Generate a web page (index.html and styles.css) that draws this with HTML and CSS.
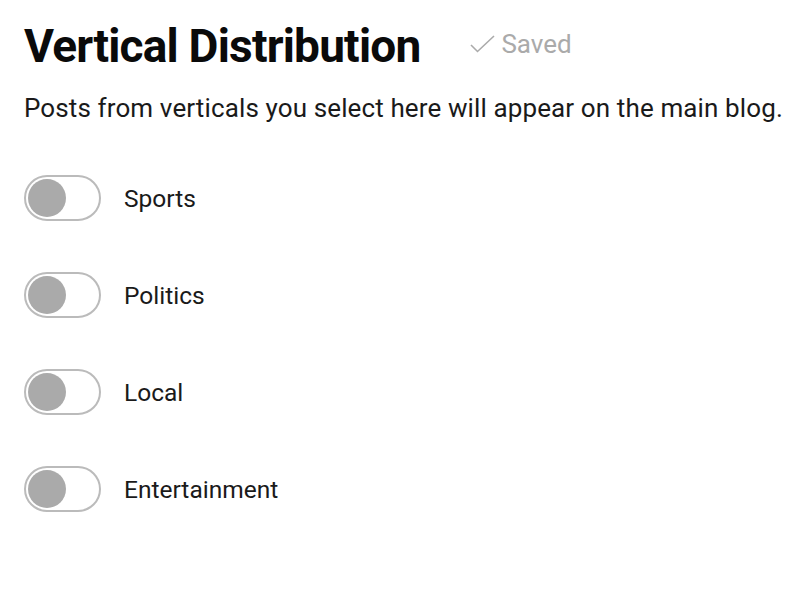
FILE: index.html
```html
<!DOCTYPE html>
<html lang="en">
<head>
  <meta charset="UTF-8">
  <meta name="viewport" content="width=device-width, initial-scale=1.0">
  <title>Vertical Distribution</title>
  <link rel="stylesheet" href="styles.css">
</head>
<body>
  <div class="container">
    <div class="header">
      <h1>Vertical Distribution</h1>
      <span class="saved">
        <svg class="check" width="25" height="18" viewBox="0 0 25 18">
          <path d="M1 10 L7.5 16.5 L24 1" fill="none" stroke="#aaa" stroke-width="1.6"/>
        </svg>
        Saved
      </span>
    </div>
    <p class="desc">Posts from verticals you select here will appear on the main blog.</p>

    <ul class="verticals">
      <li class="vertical">
        <span class="toggle"><span class="knob"></span></span>
        <span class="label">Sports</span>
      </li>
      <li class="vertical">
        <span class="toggle"><span class="knob"></span></span>
        <span class="label">Politics</span>
      </li>
      <li class="vertical">
        <span class="toggle"><span class="knob"></span></span>
        <span class="label">Local</span>
      </li>
      <li class="vertical">
        <span class="toggle"><span class="knob"></span></span>
        <span class="label">Entertainment</span>
      </li>
    </ul>
  </div>
</body>
</html>
```

FILE: styles.css
```css
body{
  margin: 0;
  background: #fff;
  font-family: Roboto, "Liberation Sans", sans-serif;
  font-variant-ligatures: none;
  color: #1a1a1a;
}

.container{
  padding: 14px 24px;
}

.header{
  display: flex;
  align-items: center;
}

.header h1{
  margin: 0;
  font-size: 46px;
  font-weight: bold;
  letter-spacing: -0.8px;
  color: #0a0a0a;
  line-height: 64px;
}

.saved{
  display: flex;
  align-items: center;
  margin-left: 50px;
  margin-bottom: 4px;
  font-size: 26px;
  color: #aaa;
}

.saved .check{
  margin-right: 6px;
}

.desc{
  margin: 14px 0 0;
  font-size: 26px;
  letter-spacing: 0.12px;
  line-height: 32px;
  white-space: nowrap;
}

.verticals{
  list-style: none;
  margin: 51px 0 0;
  padding: 0;
}

.vertical{
  display: flex;
  align-items: center;
  height: 46px;
  margin-bottom: 51px;
}

.toggle{
  box-sizing: border-box;
  display: flex;
  align-items: center;
  width: 77px;
  height: 46px;
  padding: 0 2px;
  border: 2px solid #bbb;
  border-radius: 23px;
  cursor: pointer;
}

.knob{
  width: 38px;
  height: 38px;
  border-radius: 50%;
  background: #aaa;
}

.label{
  margin-left: 23px;
  font-size: 24.5px;
}
```
